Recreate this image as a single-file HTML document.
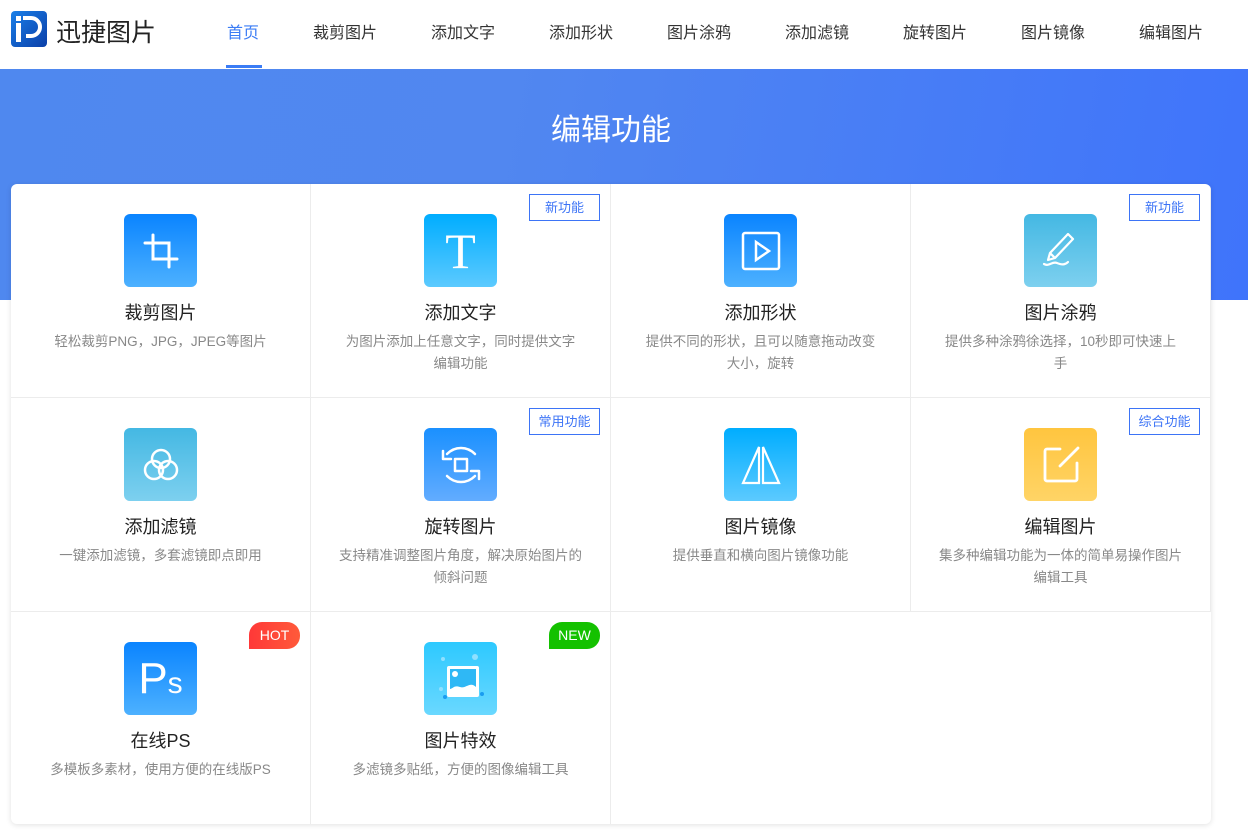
<!DOCTYPE html>
<html><head><meta charset="utf-8"><style>
*{margin:0;padding:0;box-sizing:border-box}
body{width:1248px;height:839px;background:#fff;font-family:"Liberation Sans","Noto Sans CJK SC",sans-serif;position:relative;overflow:hidden}
.hdr{position:absolute;left:0;top:0;width:1248px;height:69px;background:#fff}
.logo{position:absolute;left:11px;top:11px;width:36px;height:36px;border-radius:4px;background:linear-gradient(135deg,#1a7fe8,#0b3fa8)}
.brand{position:absolute;left:56px;top:13px;font-size:25px;color:#222}
.nav a{position:absolute;top:19px;font-size:16px;color:#333;text-decoration:none;transform:translateX(-50%);white-space:nowrap}
.nav a.on{color:#3b7cf5}
.ul{position:absolute;left:226px;top:65px;width:36px;height:3px;background:#3b7cf5}
.ban{position:absolute;left:0;top:69px;width:1248px;height:231px;background:linear-gradient(100deg,#4f88ef 0%,#5187f0 40%,#3f74fb 100%)}
.ban h1{position:absolute;left:0;width:1222px;top:36px;text-align:center;color:#fff;font-size:30px;font-weight:normal}
.card{position:absolute;left:11px;top:184px;width:1200px;height:640px;background:#fff;border-radius:6px;box-shadow:0 1px 6px rgba(0,0,0,.12);overflow:hidden}
.c{position:absolute;width:300px;height:214px;border-right:1px solid #ececec;border-bottom:1px solid #ececec;text-align:center}
.ic{position:absolute;left:113px;top:30px;width:73px;height:73px;border-radius:6px;display:flex;align-items:center;justify-content:center}
.t{position:absolute;left:0;right:0;top:115px;font-size:18px;color:#222}
.d{position:absolute;left:28px;right:28px;top:147px;font-size:13.5px;line-height:22px;color:#888}
.tag{position:absolute;right:10px;top:10px;width:71px;height:27px;border:1px solid #3d74f6;color:#3d74f6;font-size:13px;line-height:25px;text-align:center}
.hot{position:absolute;right:10px;top:10px;width:51px;height:27px;border-radius:13px 13px 13px 0;color:#fff;font-size:14px;line-height:27px}
.b1{background:linear-gradient(#0a84ff,#4db1ff)}
.b2{background:linear-gradient(#00adff,#5ccaff)}
.b3{background:linear-gradient(#44b8e3,#7dd0ef)}
.b4{background:linear-gradient(#1a90ff,#62acff)}
.b5{background:linear-gradient(#ffc53f,#ffd466)}
.b6{background:linear-gradient(#2dc9ff,#6ad8ff)}
</style></head><body>
<div class="hdr">
<div class="logo"><svg width="36" height="36" viewBox="0 0 36 36"><rect x="5" y="5" width="5" height="5" fill="#fff"/><rect x="5" y="12" width="5" height="19" fill="#fff"/><path d="M12 7h8a9 9 0 0 1 0 18h-5" fill="none" stroke="#fff" stroke-width="4"/></svg></div>
<div class="brand">迅捷图片</div>
<div class="nav">
<a class="on" style="left:243px">首页</a><a style="left:345px">裁剪图片</a><a style="left:463px">添加文字</a><a style="left:581px">添加形状</a><a style="left:699px">图片涂鸦</a><a style="left:817px">添加滤镜</a><a style="left:935px">旋转图片</a><a style="left:1053px">图片镜像</a><a style="left:1171px">编辑图片</a>
</div>
<div class="ul"></div>
</div>
<div class="ban"><h1>编辑功能</h1></div>
<div class="card">
<div class="c" style="left:0;top:0"><div class="ic b1"><svg width="40" height="40" viewBox="0 0 40 40" fill="none" stroke="#fff" stroke-width="3" stroke-linecap="round"><path d="M12 4v24h24M4 12h24v24"/></svg></div><div class="t">裁剪图片</div><div class="d">轻松裁剪PNG，JPG，JPEG等图片</div></div>
<div class="c" style="left:300px;top:0"><div class="tag">新功能</div><div class="ic b2"><span style="font-family:'Liberation Serif',serif;font-size:50px;color:#fff;line-height:1">T</span></div><div class="t">添加文字</div><div class="d">为图片添加上任意文字，同时提供文字<br>编辑功能</div></div>
<div class="c" style="left:600px;top:0"><div class="ic b1"><svg width="40" height="40" viewBox="0 0 40 40" fill="none" stroke="#fff" stroke-width="2.5"><rect x="2" y="2" width="36" height="36" rx="2"/><path d="M15 11l13 9-13 9z"/></svg></div><div class="t">添加形状</div><div class="d">提供不同的形状，且可以随意拖动改变<br>大小，旋转</div></div>
<div class="c" style="left:900px;top:0"><div class="tag">新功能</div><div class="ic b3"><svg width="40" height="40" viewBox="0 0 40 40" fill="none" stroke="#fff" stroke-width="2.2" stroke-linejoin="round" stroke-linecap="round"><path d="M27 3l5 5-18 19-7 2 2-7z M9 22l5 5"/><path d="M3 33c5 3 8-3 13-1s8 2 11-1"/></svg></div><div class="t">图片涂鸦</div><div class="d">提供多种涂鸦徐选择，10秒即可快速上<br>手</div></div>
<div class="c" style="left:0;top:214px"><div class="ic b3"><svg width="40" height="40" viewBox="0 0 40 40" fill="none" stroke="#fff" stroke-width="2.5"><circle cx="20" cy="14" r="9"/><circle cx="13" cy="25" r="9"/><circle cx="27" cy="25" r="9"/></svg></div><div class="t">添加滤镜</div><div class="d">一键添加滤镜，多套滤镜即点即用</div></div>
<div class="c" style="left:300px;top:214px"><div class="tag">常用功能</div><div class="ic b4"><svg width="44" height="40" viewBox="0 0 44 40" fill="none" stroke="#fff" stroke-width="2.5" stroke-linecap="round" stroke-linejoin="round"><rect x="16" y="14" width="12" height="12"/><path d="M36 9C28 1 16 1 8 9M4 6v8h8M8 31c8 8 20 8 28 0M40 34v-8h-8"/></svg></div><div class="t">旋转图片</div><div class="d" style="left:10px;right:10px">支持精准调整图片角度，解决原始图片的<br>倾斜问题</div></div>
<div class="c" style="left:600px;top:214px"><div class="ic b2"><svg width="40" height="42" viewBox="0 0 40 42" fill="none" stroke="#fff" stroke-width="2.2"><path d="M18 3L2 39h16zM22 3l16 36H22z"/></svg></div><div class="t">图片镜像</div><div class="d">提供垂直和横向图片镜像功能</div></div>
<div class="c" style="left:900px;top:214px"><div class="tag">综合功能</div><div class="ic b5"><svg width="40" height="40" viewBox="0 0 40 40" fill="none" stroke="#fff" stroke-width="2.8" stroke-linecap="round"><path d="M19 4H6a2 2 0 0 0-2 2v28a2 2 0 0 0 2 2h28a2 2 0 0 0 2-2V18M37 3L19 21"/></svg></div><div class="t">编辑图片</div><div class="d" style="left:10px;right:10px">集多种编辑功能为一体的简单易操作图片<br>编辑工具</div></div>
<div class="c" style="left:0;top:428px"><div class="hot" style="background:linear-gradient(90deg,#ff3838,#ff5a3a)">HOT</div><div class="ic b1"><span style="font-size:44px;color:#fff;line-height:1">P<span style="font-size:30px">s</span></span></div><div class="t">在线PS</div><div class="d" style="left:10px;right:10px">多模板多素材，使用方便的在线版PS</div></div>
<div class="c" style="left:300px;top:428px"><div class="hot" style="background:#14c100">NEW</div><div class="ic b6"><svg width="56" height="56" viewBox="0 0 56 56"><rect x="14" y="15" width="32" height="31" rx="2" fill="#fff"/><path d="M17 18h26v18c-6-6-10 2-16 0s-6 1-10 2z" fill="#2fb8f5"/><circle cx="22" cy="23" r="3" fill="#fff"/><circle cx="10" cy="8" r="2" fill="#8fe0ff"/><circle cx="42" cy="6" r="3" fill="#8fe0ff"/><circle cx="8" cy="38" r="2" fill="#8fe0ff"/><circle cx="12" cy="46" r="2" fill="#1a9cf0"/><circle cx="49" cy="43" r="2" fill="#1a9cf0"/></svg></div><div class="t">图片特效</div><div class="d">多滤镜多贴纸，方便的图像编辑工具</div></div>
</div>
</body></html>
